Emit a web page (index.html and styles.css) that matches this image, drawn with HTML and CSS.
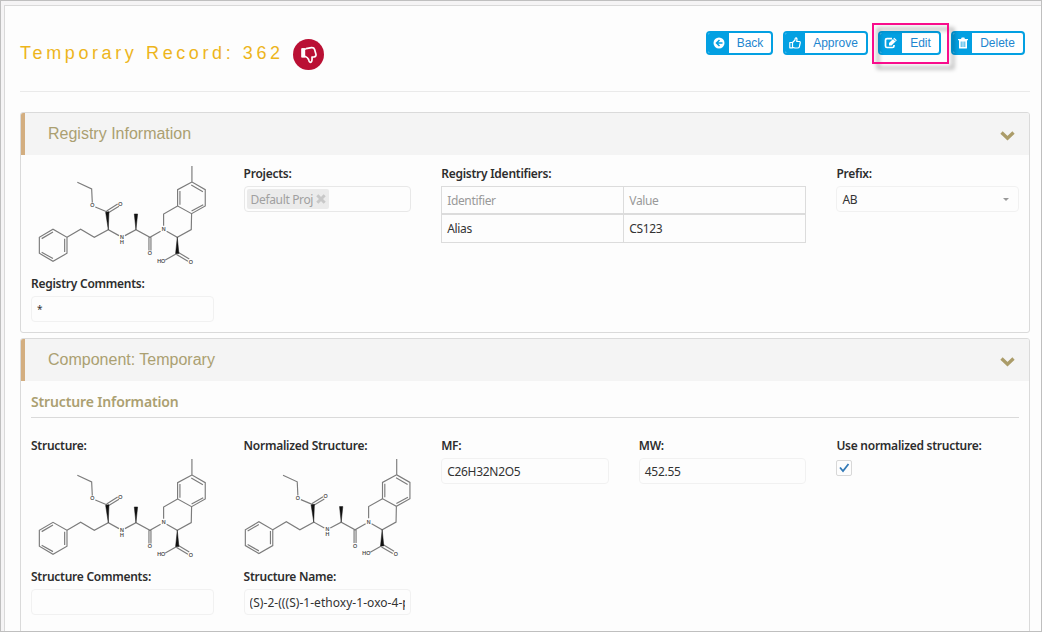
FILE: index.html
```html
<!DOCTYPE html>
<html lang="en">
<head>
<meta charset="utf-8">
<title>Temporary Record</title>
<link rel="stylesheet" href="styles.css">
</head>
<body>
<div class="window">
  <main class="page">
    <header class="top">
      <h1 class="title">Temporary Record: 362</h1>
      <span class="status"><svg width="20" height="20" viewBox="0 0 20 20"><path class="line" d="M7 3.700L12.500 2.700Q15 2.500 15.600 4.500L17 9.500Q17.300 11.500 15 11.800L13 12Q13.500 17.300 11.300 17.300Q9.900 17 9.600 14.500Q8.500 12.300 6.800 11.700H3.200V4H7"/><path class="solid" d="M2.500 3.300H6.200V12.300H2.500Z"/></svg></span>
      <nav class="actions">
        <button class="btn back"><span class="ico"><svg width="12" height="12" viewBox="0 0 12 12"><circle class="solid" cx="6" cy="6" r="5.500"/><path class="cut" d="M6.500 3L3.500 6L6.500 9M3.500 6H9.500"/></svg></span><span class="txt">Back</span></button>
        <button class="btn approve"><span class="ico"><svg width="12" height="12" viewBox="0 0 12 12"><path class="line thin" d="M3.500 5.500L6 3Q6 .7 7.200 .9Q8.500 1.500 7.700 4.500H10.500Q11.500 4.700 11.200 6L10.300 10Q10 11 8.500 11H6L3.500 10.300M.8 5.500H3.500V10.800H.8Z"/></svg></span><span class="txt">Approve</span></button>
        <div class="marked"><button class="btn edit"><span class="ico"><svg width="14" height="12" viewBox="0 0 14 12"><path class="line" d="M8 1.700H3Q1.500 1.700 1.500 3V9Q1.500 10.500 3 10.500H8.500Q10 10.500 10 9V8"/><path class="solid" d="M5 8.500V6L10.300.7L12.800 3.200L7.500 8.500Z"/><path class="cut thin" d="M9.300 1.900L11.700 4.300"/></svg></span><span class="txt">Edit</span></button><i class="outline"></i></div>
        <button class="btn delete"><span class="ico"><svg width="10" height="12" viewBox="0 0 10 12"><path class="solid" d="M0 2H3L3.700.5H6.300L7 2H10V3.200H9V11Q9 11.500 8.300 11.500H1.700Q1 11.500 1 11V3.200H0Z"/><path class="cut thin" d="M3.200 4.500V10M5 4.500V10M6.800 4.500V10"/></svg></span><span class="txt">Delete</span></button>
      </nav>
    </header>

    <section class="panel">
      <div class="panel-head"><h2>Registry Information</h2><svg class="chev" width="15" height="10" viewBox="0 0 15 10"><path d="M1.500 1.500L7.500 7.300L13.500 1.500"/></svg></div>
      <div class="grid registry">
        <div class="cell"><svg class="mol" viewBox="33 27 548 320">
          <g id="molecule">
            <g class="bonds">
              <path d="M516 33V81L556 104V153L515 176L473 153V104L516 81M514 90L549 110M550 149L515 168M480 149V108"/>
              <path d="M473 153L431 177V212M440 229L472 247L514 224L515 176"/>
              <path d="M472 295L436 315M473 291L508 312M470 299L504 319"/>
              <path d="M422 229L390 247L348 224L315 242M387 247V287M393 247V287"/>
              <path d="M297 242L265 224L223 247L182 223L141 247M262 171L226 156M217 143L215 102L172 82M260 168L293 147M264 174L297 154"/>
              <path d="M141 247V295L99 319L58 295V247L99 223ZM134 251V291M99 311L65 292M65 251L99 231"/>
            </g>
            <path class="wedge" d="M472 247L467 296H477ZM348 224L343 177H353ZM265 224L257 172L267 170Z"/>
            <g class="atoms">
              <text x="431" y="229">N</text><text x="306" y="252">N</text><text x="306" y="267">H</text>
              <text x="217" y="157">O</text><text x="301" y="152">O</text><text x="390" y="301">O</text>
              <text x="513" y="326">O</text><text x="424" y="325">HO</text>
            </g>
          </g></svg></div>
        <div class="cell"><label>Projects:</label><div class="field solid-field tags"><span class="tag">Default Proj<svg width="10" height="10" viewBox="0 0 10 10"><path d="M1.300 1.300L8.700 8.700M8.700 1.300L1.300 8.700"/></svg></span></div></div>
        <div class="cell wide"><label>Registry Identifiers:</label>
          <div class="table"><div class="th">Identifier</div><div class="th">Value</div><div class="td">Alias</div><div class="td">CS123</div></div></div>
        <div class="cell"><label>Prefix:</label><div class="field">AB<i class="caret"></i></div></div>
        <div class="cell"><label>Registry Comments:</label><div class="field star">*</div></div>
      </div>
    </section>

    <section class="panel open">
      <div class="panel-head"><h2>Component: Temporary</h2><svg class="chev" width="15" height="10" viewBox="0 0 15 10"><path d="M1.500 1.500L7.500 7.300L13.500 1.500"/></svg></div>
      <h3>Structure Information</h3>
      <div class="grid structure">
        <div class="cell"><label>Structure:</label><svg class="mol" viewBox="33 30 548 320"><use href="#molecule"/></svg></div>
        <div class="cell"><label>Normalized Structure:</label><svg class="mol" viewBox="54 30 507 320"><use href="#molecule"/></svg></div>
        <div class="cell"><label>MF:</label><div class="field">C26H32N2O5</div></div>
        <div class="cell"><label>MW:</label><div class="field">452.55</div></div>
        <div class="cell"><label>Use normalized structure:</label><span class="check"><svg width="14" height="14" viewBox="0 0 14 14"><path d="M3 6.500L6 10L11.500 3"/></svg></span></div>
        <div class="cell"><label>Structure Comments:</label><div class="field"></div></div>
        <div class="cell"><label>Structure Name:</label><div class="field name"><span>(S)-2-(((S)-1-ethoxy-1-oxo-4-p</span></div></div>
      </div>
    </section>
  </main>
</div>
</body>
</html>
```
FILE: styles.css
```css
* { box-sizing: border-box; }
body { margin: 0; font: 12px/20px "Noto Sans", sans-serif; color: #333; }
.window { width: 1042px; height: 632px; border: 1px solid #bfbfbf; background: #f5f4f5; padding: 4px 0 0 3px; overflow: hidden; }
.page { height: 640px; border: 1px solid #d9d9d9; border-right: 0; background: #fdfdfd; padding: 0 11px 0 15px; }

.top { display: flex; align-items: flex-start; height: 86px; border-bottom: 1px solid #eaeaea; margin-bottom: 20px; }
.title { margin: 36px 0 0; font: 18px/22px "Liberation Sans", sans-serif; letter-spacing: 3.6px; color: #edb51c; width: 273px; white-space: nowrap; }
.status { width: 31px; height: 31px; margin-top: 33px; border-radius: 50%; background: #ba1034; display: flex; align-items: center; justify-content: center; }
.line { fill: none; stroke: #fff; stroke-width: 1.7; stroke-linejoin: round; }
.line.thin { stroke-width: 1.2; }
.solid { fill: #fff; }
.cut { fill: none; stroke: #03a0e2; stroke-width: 1.5; }
.cut.thin { stroke-width: .8; }
.actions { display: flex; gap: 10px; margin: 25px 5px 0 auto; }
.btn { display: flex; height: 24px; padding: 0; border: 2px solid #03a0e2; border-radius: 4px; background: #fff; overflow: hidden; font: 12px/20px "Liberation Sans", sans-serif; color: #1e86cf; }
.ico { flex: none; width: 21px; height: 20px; background: #03a0e2; display: flex; align-items: center; justify-content: center; }
.txt { flex: 1; text-align: center; }
.back { width: 67px; }
.approve { width: 85px; }
.approve .ico { width: 20px; }
.edit { width: 63px; }
.edit .ico { width: 22px; }
.delete { width: 74px; }
.delete .ico { width: 19px; }
.marked { position: relative; }
.outline { position: absolute; left: -6px; top: -8px; width: 77px; height: 41px; border: 2px solid #f90d8c; filter: drop-shadow(5px 5px 2px rgba(0,0,0,.38)); z-index: 1; }

.panel { height: 221px; border: 1px solid #dadada; border-radius: 3px; margin-bottom: 5px; overflow: hidden; }
.panel.open { height: 330px; }
.panel-head { height: 42px; background: #f4f4f4; border-left: 4px solid #d3ae80; display: flex; align-items: center; justify-content: space-between; padding: 0 14px 0 23px; }
h2 { margin: 0; font: 16px/20px "Liberation Sans", sans-serif; color: #aba071; }
.chev { margin-top: 4px; }
.chev path { fill: none; stroke: #ab9c69; stroke-width: 3.3; }
h3 { margin: 0 10px 18px; height: 37px; padding-top: 11px; font-size: 14px; line-height: 20px; font-weight: 600; letter-spacing: -.14px; color: #aba071; border-bottom: 1px solid #dadada; }
.grid { display: grid; grid-template-columns: repeat(5, 1fr); margin: 0 10px; }
.registry { margin-top: 9px; grid-template-rows: 110px auto; }
.structure { grid-template-rows: 131px auto; }
.cell { padding: 0 15px; min-width: 0; }
.cell:nth-child(1), .registry .cell:nth-child(5), .structure .cell:nth-child(6) { padding-left: 0; }
.registry .cell:nth-child(4), .structure .cell:nth-child(5) { padding-right: 0; }
.wide { grid-column: span 2; }
label { display: block; height: 22px; font-weight: 600; letter-spacing: -.26px; color: #2d2d2d; white-space: nowrap; }
.field { height: 26px; border: 1px solid #f1f1f1; border-radius: 4px; padding: 0 5px; line-height: 25px; letter-spacing: -.3px; display: flex; align-items: center; justify-content: space-between; }
.solid-field { border-color: #e8e8e8; }
.star { font-size: 10px; }
.tags { padding: 0 2px; }
.tag { height: 20px; background: #ebebeb; border-radius: 2px; color: #a0a0a0; line-height: 21px; padding: 0 3px 0 4px; display: flex; align-items: center; gap: 3px; letter-spacing: -.35px; }
.tag path { stroke: #c8c8c8; stroke-width: 3; }
.caret { border: 3.500px solid transparent; border-top-color: #999; border-bottom: 0; margin-right: 4px; }
.table { display: grid; grid-template-columns: 1fr 1fr; grid-template-rows: 28px 29px; border-left: 1px solid #dcdcdc; letter-spacing: -.35px; }
.table > div { border: 1px solid #dcdcdc; border-left: 0; padding: 0 5px; line-height: 28px; }
.th { color: #999; }
.td { line-height: 27px; }
.name { padding: 0 5px; letter-spacing: .04px; }
.name span { overflow: hidden; white-space: nowrap; }
.check { display: flex; width: 16px; height: 16px; border: 1px solid #d8d8d8; border-radius: 2px; margin-top: 2px; }
.check path { fill: none; stroke: #337ab7; stroke-width: 1.8; }
.mol { display: block; width: 100%; }
.bonds { fill: none; stroke: #7c7c7c; stroke-width: 3.5; }
.wedge { fill: #111; stroke: #111; stroke-width: 1.5; }
.atoms { font: 16px "Liberation Sans", sans-serif; fill: #333; stroke: #333; stroke-width: .4; text-anchor: middle; }
```
